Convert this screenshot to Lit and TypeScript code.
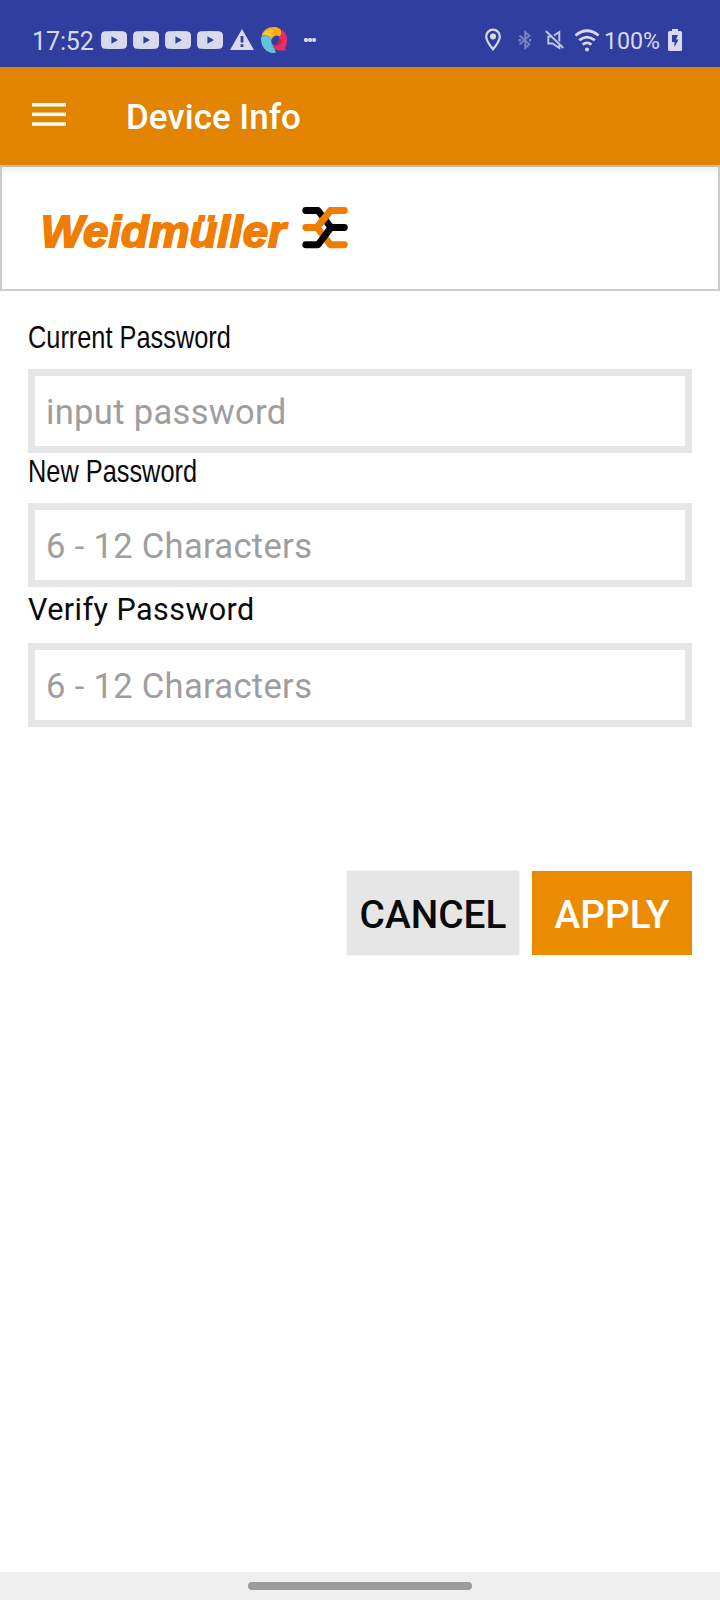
import { LitElement, html, css, svg } from "lit";
import { customElement } from "lit/decorators.js";

@customElement("status-bar")
class StatusBar extends LitElement {
  static styles = css`
    :host {
      display: flex;
      height: 67px;
      box-sizing: border-box;
      padding: 16px 36px 0 32px;
      align-items: center;
      background: #303e9f;
      color: #d8daec;
      font-family: Roboto, sans-serif;
    }
    svg { display: block; flex: none; }
    .time { width: 66px; font-size: 25px; line-height: 51px; letter-spacing: -0.1px; }
    .spacer { flex: 1; }
    .level { width: 59px; font-size: 23.2px; line-height: 48px; padding-bottom: 2px; white-space: nowrap; }
  `;
  render() {
    return html`
      <span class="time">17:52</span>
      <svg width="222" height="51" viewBox="98 16 222 51">
        ${[101, 133, 165, 197].map(
          (x) => svg`<path fill="#d8daec" fill-rule="evenodd" transform="translate(${x} 31)"
            d="M4 .3Q13-.3 22 .3Q26 .6 26 5V13Q26 17.5 22 17.8Q13 18.3 4 17.8Q0 17.5 0 13V5Q0 .6 4 .3ZM10.400 5.200V12.800L17 9Z"/>`
        )}
        <path fill="#d8daec" fill-rule="evenodd" d="M242 29L254 50H230ZM240.600 36V42.600H243.400V36ZM240.600 44.200V47H243.400V44.200Z"/>
        <path fill="#fbab17" d="M261.500 36C263 30 268 27 274 27C279 27 281.500 29.500 281.500 32.500L280.500 37C277.500 34.500 274 35 271.500 39.500C269 35.500 265 35 261.500 36Z"/>
        <path fill="#f9c62c" d="M261.800 35.500C264 31 269 28.500 273 31L270.500 37.500C268 35 265 34.500 261.800 35.500Z"/>
        <path fill="#5fc3dd" d="M261 37C264.500 35 269 35.500 271.500 39.500C270.500 43.500 273 46.500 277.500 46C274 48 274 50 276.500 52.600C268 54.500 260 48 261 37Z"/>
        <path fill="#e92e63" d="M281.800 29.500C288 34 288.500 42 284.500 49L286.500 50.500H282C278 51 274.500 50 272.500 46C277 45.500 280 42 279 37C281.500 35 282.500 32 281.800 29.500Z"/>
        <path fill="#c91f55" d="M272.500 46C277.500 45 280.500 42 279 37L282 41C281 45 277 47.500 272.500 46Z"/>
        <g fill="#d8daec"><rect x="304" y="38" width="4" height="4" rx="1.400"/><rect x="308.200" y="38" width="3.800" height="4" rx="1.400"/><rect x="312.200" y="38" width="3.800" height="4" rx="1.400"/></g>
      </svg>
      <span class="spacer"></span>
      <svg width="124" height="51" viewBox="480 16 124 51">
        <path fill="none" stroke="#d8daec" stroke-width="2.200" d="M493 49.300C489.500 45 486.200 40.500 486.200 36.500A6.800 6.900 0 0 1 499.800 36.500C499.800 40.500 496.500 45 493 49.300Z"/>
        <circle cx="493" cy="36.500" r="3" fill="#d8daec"/>
        <path fill="none" stroke="#7882c0" stroke-width="1.900" d="M519.500 35.500L529.300 44.300L525.200 48V32L529.300 35.700L519.500 44.500"/>
        <path fill="#7882c0" d="M518.500 39h2.400v2.400h-2.400zM529 39h2.200v2.400h-2.200z"/>
        <g fill="none" stroke="#c2c6e3" stroke-width="1.900"><path d="M545.800 31L563.300 48"/><path d="M552 36.600H548.300V43.500H552.500L559.300 48V45M554 35.500L559.300 32V41.500"/></g>
        <g fill="none" stroke="#d8daec" stroke-width="2.700"><path d="M575.500 35.500Q587 26 598.600 35.500"/><path d="M579.200 40.300Q587 33.800 594.900 40.300"/><path d="M582.700 44.600Q587 41 591.400 44.600"/></g>
        <circle cx="587" cy="49.400" r="2" fill="#d8daec"/>
      </svg>
      <span class="level">100%</span>
      <svg width="21" height="51" viewBox="663 16 21 51">
        <path fill="#d8daec" fill-rule="evenodd" d="M672 29H678V31H680.500Q682 31 682 32.500V49.500Q682 51 680.500 51H669.500Q668 51 668 49.500V32.500Q668 31 669.500 31H672ZM672 35V42H674.500V47L678.500 39.500H676L678 35Z"/>
      </svg>
    `;
  }
}

@customElement("app-bar")
class AppBar extends LitElement {
  static styles = css`
    :host {
      display: flex;
      height: 98px;
      box-sizing: border-box;
      padding: 0 32px;
      align-items: center;
      gap: 60px;
      background: #e38400;
      color: #fff;
      font-family: Roboto, sans-serif;
    }
    svg { display: block; margin-bottom: 3px; }
    h1 { margin: 0; padding-top: 3px; font-size: 35px; font-weight: 500; line-height: 44px; white-space: nowrap; }
  `;
  render() {
    return html`
      <svg width="34" height="23" viewBox="0 0 34 23" fill="#fff">
        <rect width="34" height="3.500"/><rect y="9.600" width="34" height="3.500"/><rect y="19.300" width="34" height="3.500"/>
      </svg>
      <h1>Device Info</h1>
    `;
  }
}

@customElement("brand-banner")
class BrandBanner extends LitElement {
  static styles = css`
    :host {
      display: block;
      height: 126px;
      box-sizing: border-box;
      border: 2px solid #cbcbcb;
      border-top-color: #bbb;
      background: linear-gradient(#f0f0f0, #fff 8px);
    }
    svg { display: block; }
    .word {
      font: italic 700 45px "Liberation Sans", sans-serif;
      fill: #f07d00;
      stroke: #f07d00;
      stroke-width: 1.9px;
    }
  `;
  render() {
    return html`
      <svg width="400" height="122" viewBox="2 167 400 122">
        <text class="word" x="40.800" y="247.200" textLength="245" lengthAdjust="spacingAndGlyphs">Weidmüller</text>
        <g fill="none" stroke-width="6.900" stroke-linecap="round" stroke-linejoin="round">
          <path stroke="#000" d="M305.800 210.500H318L331 227.500H344.300"/>
          <path stroke="#f07d00" d="M305.800 227.500H317L330.500 244.800H344.300"/>
          <path stroke="#f07d00" d="M344.300 210.500H330.500L317 227.500"/>
          <path stroke="#000" d="M305.800 244.800H318L331 227.500"/>
        </g>
      </svg>
    `;
  }
}

@customElement("password-form")
class PasswordForm extends LitElement {
  static styles = css`
    :host { display: block; padding: 28px 28px 0; font-family: Roboto, sans-serif; color: #0a0a0a; }
    .label { display: block; height: 50px; font-size: 30.5px; line-height: 36.6px; white-space: nowrap; }
    .condensed {
      font-family: "Liberation Sans", sans-serif;
      font-size: 32px;
      transform: scaleX(0.792);
      transform-origin: left;
    }
    .roomy { height: 56px; line-height: 45px; letter-spacing: 0.45px; }
    .field {
      display: block;
      width: 100%;
      height: 84px;
      box-sizing: border-box;
      border: 7px solid #e6e6e6;
      border-radius: 0;
      padding: 2px 11px 0;
      background: #fff;
      outline: none;
      font-family: inherit;
      font-size: 34.5px;
      letter-spacing: 0.34px;
    }
    .field::placeholder { color: #9e9e9e; opacity: 1; }
    .actions { display: flex; justify-content: flex-end; gap: 13px; margin-top: 144px; }
    .button {
      height: 84px;
      border: 0;
      padding: 2px 0 0;
      font-family: inherit;
      font-size: 38.8px;
      font-weight: 500;
    }
    .cancel { width: 172px; background: #e6e6e6; color: #0a0a0a; box-shadow: 0 0 2px #0002; }
    .apply { width: 160px; background: #eb8c00; color: #fff; }
  `;
  render() {
    return html`
      <label class="label condensed" for="current">Current Password</label>
      <input class="field" id="current" placeholder="input password" />
      <label class="label condensed" for="new">New Password</label>
      <input class="field" id="new" placeholder="6 - 12 Characters" />
      <label class="label roomy" for="verify">Verify Password</label>
      <input class="field" id="verify" placeholder="6 - 12 Characters" />
      <div class="actions">
        <button class="button cancel">CANCEL</button>
        <button class="button apply">APPLY</button>
      </div>
    `;
  }
}

@customElement("app-root")
class AppRoot extends LitElement {
  static styles = css`
    :host { display: flex; flex-direction: column; width: 720px; height: 1600px; overflow: hidden; background: #fff; }
    .content { flex: 1; }
    .nav { display: flex; height: 28px; align-items: center; justify-content: center; background: #efefef; }
    .handle { width: 224px; height: 8px; border-radius: 4px; background: #9b9b9b; }
  `;
  render() {
    return html`
      <status-bar></status-bar>
      <app-bar></app-bar>
      <brand-banner></brand-banner>
      <password-form class="content"></password-form>
      <div class="nav"><div class="handle"></div></div>
    `;
  }
}
